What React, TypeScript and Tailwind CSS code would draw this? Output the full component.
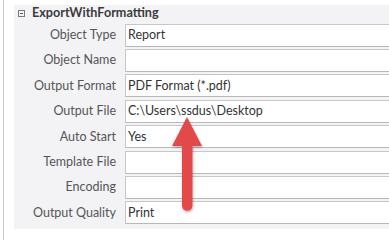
import type React from "react";

const rows: { label: string; value: string }[] = [
  { label: "Object Type", value: "Report" },
  { label: "Object Name", value: "" },
  { label: "Output Format", value: "PDF Format (*.pdf)" },
  { label: "Output File", value: "C:\\Users\\ssdus\\Desktop" },
  { label: "Auto Start", value: "Yes" },
  { label: "Template File", value: "" },
  { label: "Encoding", value: "" },
  { label: "Output Quality", value: "Print" },
];

const font = { fontFamily: 'Lato, "Open Sans", sans-serif' };

const Arrow: React.FC = () => (
  <svg
    className="absolute left-0 top-0 pointer-events-none"
    width="389"
    height="240"
    viewBox="0 0 389 240"
  >
    <defs>
      <filter id="sh" x="-50%" y="-50%" width="200%" height="200%">
        <feDropShadow dx="0.5" dy="1.5" stdDeviation="1.2" floodColor="#000" floodOpacity="0.3" />
      </filter>
    </defs>
    <g filter="url(#sh)" fill="#e4494a">
      <path d="M187 117 L202 146 L172 146 Z" />
      <path d="M182 144 H192.5 V205.5 A5.25 5.25 0 0 1 182 205.5 Z" />
    </g>
  </svg>
);

export default function App() {
  return (
    <div className="relative w-[389px] h-[240px] bg-white overflow-hidden flex" style={font}>
      <div className="w-[3px] shrink-0" />
      <div className="w-[1px] shrink-0 bg-[#c9c9c9]" />
      <div className="w-[10px] shrink-0" />
      <div className="w-[400px] shrink-0 mt-[5px] h-[224px] bg-[#f3f3f5] flex flex-col">
        <div className="h-[17.5px] flex items-center">
          <div className="ml-[4px] w-[7px] h-[7px] border border-[#7a7a7a] flex items-center justify-center">
            <div className="w-[3px] h-[1px] bg-[#555]" />
          </div>
          <span className="ml-[7px] text-[12.6px] font-bold text-[#3b3b3b] leading-none">
            ExportWithFormatting
          </span>
        </div>
        {rows.map((r) => (
          <div key={r.label} className="h-[25.4px] flex items-center">
            <div className="w-[102px] text-right text-[12.5px] text-[#555] leading-none">
              {r.label}
            </div>
            <div className="ml-[9px] flex-1 h-[23px] bg-white border border-[#c7c7c7] border-b-[#b8b8b8] flex items-center pl-[2px] text-[12.5px] text-[#333] leading-none">
              {r.value}
            </div>
          </div>
        ))}
      </div>
      <Arrow />
    </div>
  );
}
